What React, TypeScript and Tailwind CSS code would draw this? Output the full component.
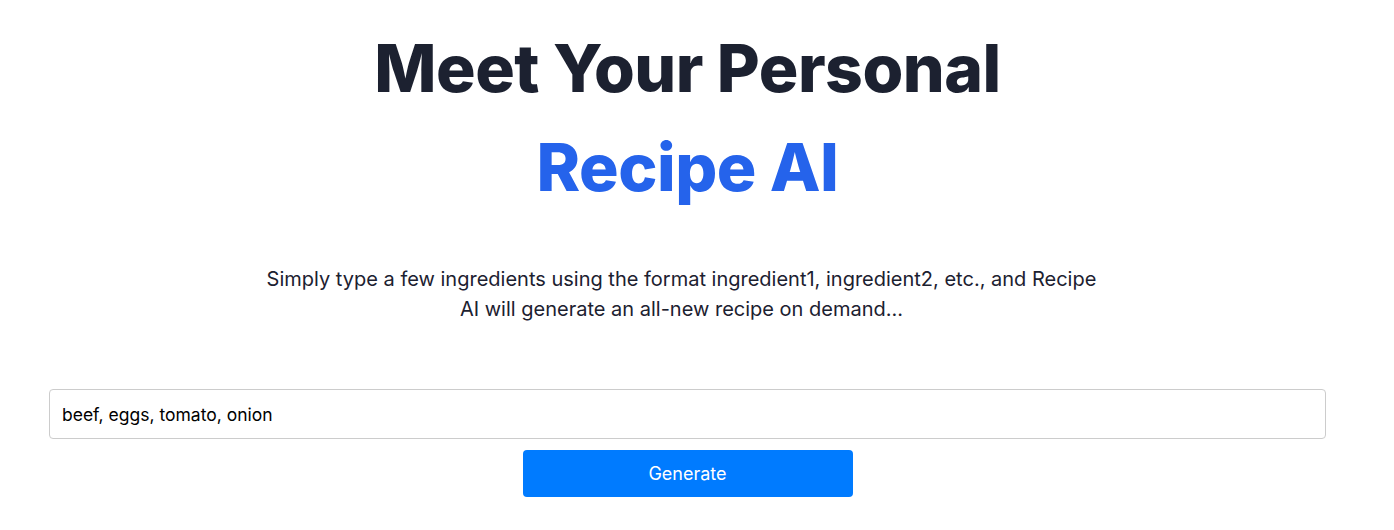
import React, { useState } from 'react';

const App = () => {
  const [ingredients, setIngredients] = useState('beef, eggs, tomato, onion');

  return (
    <div className="w-[1375px] min-h-[530px] bg-white font-['Inter','Noto_Sans',sans-serif]">
      <div className="flex flex-col items-center pt-[19px]">
        {/* Hero heading */}
        <h1 className="text-[66px] leading-[99px] font-extrabold tracking-[-0.5px] text-[#1c2130] text-center">
          Meet Your Personal
          <span className="block text-[#2563eb]">Recipe AI</span>
        </h1>

        <p className="mt-[47px] mr-[12px] max-w-[840px] text-center text-[20px] leading-[30px] text-[#1c2130]">
          Simply type a few ingredients using the format ingredient1, ingredient2, etc., and Recipe AI will generate an all-new recipe on demand...
        </p>

        {/* Ingredient form */}
        <form className="w-full px-[49px] mt-[65px] flex flex-col items-center gap-[11px]" onSubmit={e => e.preventDefault()}>
          <input
            value={ingredients}
            onChange={e => setIngredients(e.target.value)}
            className="w-full h-[50px] px-[12px] border border-[#cccccc] rounded-[4px] text-[17.5px] text-black outline-none"
          />
          <button type="submit" className="w-[330px] h-[47px] bg-[#007bff] rounded-[4px] text-white text-[18px]">
            Generate
          </button>
        </form>
      </div>
    </div>
  );
};

export default App;
